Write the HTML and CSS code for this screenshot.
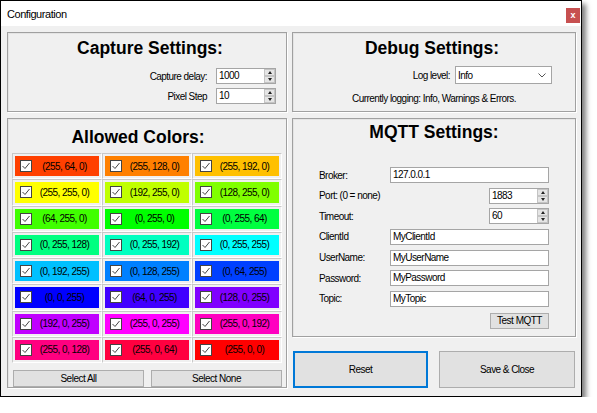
FILE: index.html
```html
<!DOCTYPE html>
<html>
<head>
<meta charset="utf-8">
<link rel="stylesheet" href="styles.css">
</head>
<body>
<div class="window">
  <div class="titlebar">
    <span class="title">Configuration</span>
    <div class="close">x</div>
  </div>
  <div class="client">
    <section class="panel capture">
      <h2>Capture Settings:</h2>
      <div class="rows">
        <div class="form-row">
          <span class="lbl">Capture delay:</span>
          <div class="spin"><span class="val">1000</span><span class="spin-btns"><i class="up"></i><i class="down"></i></span></div>
        </div>
        <div class="form-row">
          <span class="lbl">Pixel Step</span>
          <div class="spin"><span class="val">10</span><span class="spin-btns"><i class="up"></i><i class="down"></i></span></div>
        </div>
      </div>
    </section>

    <section class="panel debug">
      <h2>Debug Settings:</h2>
      <div class="form-row log-row">
        <span class="lbl">Log level:</span>
        <div class="combo"><span class="val">Info</span>
          <svg class="chev" width="8" height="5" viewBox="0 0 8 5"><path d="M0.5 0.5 L4 4 L7.5 0.5" fill="none" stroke="#555" stroke-width="1"/></svg>
        </div>
      </div>
      <p class="status">Currently logging: Info, Warnings &amp; Errors.</p>
    </section>

    <section class="panel colors">
      <h2>Allowed Colors:</h2>
      <div class="color-grid">
        <div class="cell"><div class="swatch" style="background:rgb(255,64,0)"><span class="cb"></span><span class="txt">(255, 64, 0)</span></div></div>
        <div class="cell"><div class="swatch" style="background:rgb(255,128,0)"><span class="cb"></span><span class="txt">(255, 128, 0)</span></div></div>
        <div class="cell"><div class="swatch" style="background:rgb(255,192,0)"><span class="cb"></span><span class="txt">(255, 192, 0)</span></div></div>
        <div class="cell"><div class="swatch" style="background:rgb(255,255,0)"><span class="cb"></span><span class="txt">(255, 255, 0)</span></div></div>
        <div class="cell"><div class="swatch" style="background:rgb(192,255,0)"><span class="cb"></span><span class="txt">(192, 255, 0)</span></div></div>
        <div class="cell"><div class="swatch" style="background:rgb(128,255,0)"><span class="cb"></span><span class="txt">(128, 255, 0)</span></div></div>
        <div class="cell"><div class="swatch" style="background:rgb(64,255,0)"><span class="cb"></span><span class="txt">(64, 255, 0)</span></div></div>
        <div class="cell"><div class="swatch" style="background:rgb(0,255,0)"><span class="cb"></span><span class="txt">(0, 255, 0)</span></div></div>
        <div class="cell"><div class="swatch" style="background:rgb(0,255,64)"><span class="cb"></span><span class="txt">(0, 255, 64)</span></div></div>
        <div class="cell"><div class="swatch" style="background:rgb(0,255,128)"><span class="cb"></span><span class="txt">(0, 255, 128)</span></div></div>
        <div class="cell"><div class="swatch" style="background:rgb(0,255,192)"><span class="cb"></span><span class="txt">(0, 255, 192)</span></div></div>
        <div class="cell"><div class="swatch" style="background:rgb(0,255,255)"><span class="cb"></span><span class="txt">(0, 255, 255)</span></div></div>
        <div class="cell"><div class="swatch" style="background:rgb(0,192,255)"><span class="cb"></span><span class="txt">(0, 192, 255)</span></div></div>
        <div class="cell"><div class="swatch" style="background:rgb(0,128,255)"><span class="cb"></span><span class="txt">(0, 128, 255)</span></div></div>
        <div class="cell"><div class="swatch" style="background:rgb(0,64,255)"><span class="cb"></span><span class="txt">(0, 64, 255)</span></div></div>
        <div class="cell"><div class="swatch" style="background:rgb(0,0,255)"><span class="cb"></span><span class="txt">(0, 0, 255)</span></div></div>
        <div class="cell"><div class="swatch" style="background:rgb(64,0,255)"><span class="cb"></span><span class="txt">(64, 0, 255)</span></div></div>
        <div class="cell"><div class="swatch" style="background:rgb(128,0,255)"><span class="cb"></span><span class="txt">(128, 0, 255)</span></div></div>
        <div class="cell"><div class="swatch" style="background:rgb(192,0,255)"><span class="cb"></span><span class="txt">(192, 0, 255)</span></div></div>
        <div class="cell"><div class="swatch" style="background:rgb(255,0,255)"><span class="cb"></span><span class="txt">(255, 0, 255)</span></div></div>
        <div class="cell"><div class="swatch" style="background:rgb(255,0,192)"><span class="cb"></span><span class="txt">(255, 0, 192)</span></div></div>
        <div class="cell"><div class="swatch" style="background:rgb(255,0,128)"><span class="cb"></span><span class="txt">(255, 0, 128)</span></div></div>
        <div class="cell"><div class="swatch" style="background:rgb(255,0,64)"><span class="cb"></span><span class="txt">(255, 0, 64)</span></div></div>
        <div class="cell"><div class="swatch" style="background:rgb(255,0,0)"><span class="cb"></span><span class="txt">(255, 0, 0)</span></div></div>
      </div>
      <div class="select-btns">
        <button class="btn">Select All</button>
        <button class="btn">Select None</button>
      </div>
    </section>

    <div class="right-col">
      <section class="panel mqtt">
        <h2>MQTT Settings:</h2>
        <div class="mqtt-form">
          <span class="lbl">Broker:</span><div class="text-in">127.0.0.1</div>
          <span class="lbl">Port: (0 = none)</span>
          <div class="spin narrow"><span class="val">1883</span><span class="spin-btns"><i class="up"></i><i class="down"></i></span></div>
          <span class="lbl">Timeout:</span>
          <div class="spin narrow"><span class="val">60</span><span class="spin-btns"><i class="up"></i><i class="down"></i></span></div>
          <span class="lbl">ClientId</span><div class="text-in">MyClientId</div>
          <span class="lbl">UserName:</span><div class="text-in">MyUserName</div>
          <span class="lbl">Password:</span><div class="text-in">MyPassword</div>
          <span class="lbl">Topic:</span><div class="text-in">MyTopic</div>
        </div>
        <div class="test-row"><button class="btn test">Test MQTT</button></div>
      </section>
      <div class="actions">
        <button class="btn big focused">Reset</button>
        <button class="btn big">Save &amp; Close</button>
      </div>
    </div>
  </div>
</div>
</body>
</html>
```

FILE: styles.css
```css
* { box-sizing: border-box; }
html, body { margin: 0; padding: 0; background: #ffffff; }
body {
  font-family: "Liberation Sans", Arial, sans-serif;
  font-size: 10px;
  letter-spacing: -0.55px;
  color: #000;
}

.window {
  width: 582px;
  height: 397px;
  border: 1px solid #000;
  background: #f0f0f0;
  box-shadow: 4px 4px 5px rgba(0, 0, 0, 0.5);
  display: flex;
  flex-direction: column;
}

.titlebar {
  height: 25px;
  background: #fff;
  display: flex;
  align-items: flex-start;
  justify-content: space-between;
  padding-left: 6px;
  padding-right: 1px;
}
.title {
  font-size: 11px;
  letter-spacing: -0.45px;
  line-height: 14px;
  margin-top: 6px;
}
.close {
  width: 14px;
  height: 15px;
  margin-top: 7px;
  background: #c75050;
  color: #fff;
  font-weight: bold;
  font-size: 9px;
  letter-spacing: 0;
  line-height: 14px;
  text-align: center;
}

.client {
  flex: 1;
  display: grid;
  grid-template-columns: 280px 284px;
  grid-template-rows: 80px 270px;
  column-gap: 5px;
  row-gap: 6px;
  padding: 6px 0 0 6px;
}

.panel {
  border: 1px solid #a0a0a0;
  box-shadow: inset 1px 1px 0 #e4e4e4, 1px 1px 0 #fff;
  background: #f0f0f0;
}

h2 {
  margin: 0;
  font-size: 17.5px;
  letter-spacing: 0;
  line-height: 22px;
  font-weight: bold;
  text-align: center;
}

/* capture */
.capture { padding-top: 4px; }
.capture h2 { padding-left: 6px; }
.capture .rows {
  margin-top: 9px;
  display: flex;
  flex-direction: column;
  gap: 4px;
  padding-right: 10px;
}
.form-row {
  display: flex;
  justify-content: flex-end;
  align-items: center;
  height: 16px;
  gap: 9px;
}
.lbl { white-space: nowrap; }

.spin {
  width: 60px;
  height: 16px;
  border: 1px solid #a5a5a5;
  background: #fff;
  display: flex;
  align-items: stretch;
}
.spin .val {
  flex: 1;
  padding-left: 2px;
  line-height: 14px;
}
.spin-btns {
  width: 12px;
  display: flex;
  flex-direction: column;
  border-left: 1px solid #fff;
}
.spin-btns i {
  flex: 1;
  background: #e5e5e5;
  border: 1px solid #c4c4c4;
  display: flex;
  align-items: center;
  justify-content: center;
}
.spin-btns i::after {
  content: "";
  width: 0;
  height: 0;
  border-left: 2.5px solid transparent;
  border-right: 2.5px solid transparent;
}
.spin-btns .up::after { border-bottom: 3px solid #222; }
.spin-btns .down::after { border-top: 3px solid #222; }

/* debug */
.debug { padding-top: 4px; }
.debug h2 { padding-right: 4px; }
.log-row {
  margin-top: 7px;
  height: 18px;
  gap: 5px;
  padding-right: 23px;
}
.combo {
  width: 97px;
  height: 18px;
  border: 1px solid #a5a5a5;
  background: #fff;
  display: flex;
  align-items: center;
  justify-content: space-between;
  padding: 0 5px 0 2px;
}
.status {
  margin: 9px 0 0;
  text-align: center;
  line-height: 12px;
}

/* colors */
.colors { padding: 7px 0 0 4px; }
.colors h2 { padding-right: 22px; }
.color-grid {
  margin-top: 5px;
  width: 270px;
  height: 210px;
  display: grid;
  grid-template-columns: repeat(3, 1fr);
  grid-template-rows: repeat(8, 1fr);
}
.cell {
  border-top: 1px solid #c8c8c8;
  border-left: 1px solid #c8c8c8;
  border-right: 1px solid #fff;
  border-bottom: 1px solid #fff;
  padding: 2px;
  display: flex;
}
.swatch {
  flex: 1;
  display: flex;
  align-items: center;
  padding-left: 5px;
}
.cb {
  width: 12px;
  height: 12px;
  border: 1px solid #444;
  background: #fff url("data:image/svg+xml;utf8,<svg xmlns='http://www.w3.org/2000/svg' width='10' height='10' viewBox='0 0 10 10'><path d='M1.5 5 L4 7.5 L8.5 2' fill='none' stroke='%23444' stroke-width='1'/></svg>") center/10px 10px no-repeat;
  flex: none;
}
.txt {
  flex: 1;
  text-align: center;
  padding-right: 2px;
}
.select-btns {
  margin-top: 7px;
  display: flex;
  gap: 7px;
  padding-left: 1px;
}
.btn {
  font-family: inherit;
  font-size: 10px;
  letter-spacing: -0.5px;
  color: #000;
  background: #e1e1e1;
  border: 1px solid #adadad;
  padding: 0;
  margin: 0;
}
.select-btns .btn { width: 131px; height: 17px; }

/* right column */
.right-col {
  display: flex;
  flex-direction: column;
}
.mqtt {
  height: 219px;
  padding: 2px 0 0 26px;
}
.mqtt h2 { margin-left: -26px; }
.mqtt-form {
  margin-top: 24px;
  display: grid;
  grid-template-columns: 71px 159px;
  grid-auto-rows: 16px;
  row-gap: 4.67px;
  align-items: center;
}
.text-in {
  height: 16px;
  border: 1px solid #a5a5a5;
  background: #fff;
  padding-left: 2px;
  line-height: 14px;
}
.spin.narrow { justify-self: end; }
.test-row {
  width: 230px;
  display: flex;
  justify-content: flex-end;
  margin-top: 6px;
}
.btn.test { width: 59px; height: 16px; }

.actions {
  margin-top: 14px;
  display: flex;
  gap: 11px;
  padding-left: 1px;
}
.btn.big {
  width: 136px;
  height: 37px;
  font-size: 10px;
  letter-spacing: -0.55px;
}
.btn.focused { border: 2px solid #0078d7; width: 135px; }
```
